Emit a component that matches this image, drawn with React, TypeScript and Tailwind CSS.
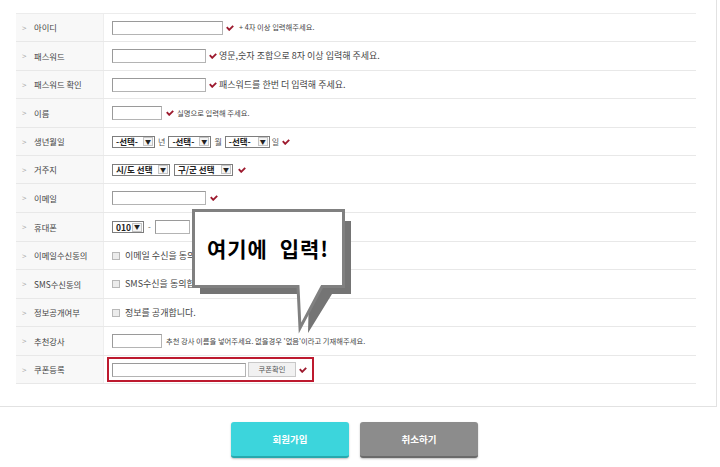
import React from "react";

const Chk = () => (
  <svg width="8" height="6" viewBox="0 0 8 6" className="shrink-0">
    <path d="M0.8 2.2 L3.2 4.8 L7.2 0.8" fill="none" stroke="#9d1a2e" strokeWidth="1.9" />
  </svg>
);

const Input = ({ w }: { w: string }) => (
  <div className={`${w} h-[14px] border border-[#b4b4b4] border-t-[#9a9a9a] border-l-[#9a9a9a] bg-white shrink-0`} />
);

const Select = ({ w, text }: { w: string; text: string }) => (
  <div
    className={`${w} h-[12px] border border-[#7d7d7d] bg-white flex items-center justify-between pl-[3px] pr-[1px] shrink-0`}
  >
    <span className="text-[8.5px] font-bold text-[#222] leading-none">{text}</span>
    <span className="h-[9px] px-[1px] border border-[#c4c4c4] bg-[#f4f4f4] flex items-center text-[6px] text-[#222] leading-none">
      ▼
    </span>
  </div>
);

const Box = () => <div className="w-[8px] h-[8px] border border-[#b8b8b8] bg-[#ececec] shrink-0" />;

const Row = ({ label, h, children }: { label: string; h: string; children?: React.ReactNode }) => (
  <div className={`flex ${h} border-b border-[#e8e8e8]`}>
    <div className="w-[88px] shrink-0 bg-[#f8f8f8] border-r border-[#eeeeee] flex items-center pl-[6px]">
      <span className="text-[8px] text-[#aaaaaa] leading-none w-[12px]">&gt;</span>
      <span className="text-[8.3px] text-[#444] leading-none">{label}</span>
    </div>
    <div className="flex-1 flex items-center pl-2">{children}</div>
  </div>
);

export default function App() {
  return (
    <div className="relative w-[720px] h-[467px] bg-white overflow-hidden font-['Noto_Sans_CJK_KR','Noto_Sans',sans-serif]">
      <div className="w-[717px] h-[407px] border-r border-b border-[#e2e2e2] pl-4 pr-5 pt-[13px]">
        <div className="border-t border-[#ececec]">
          <Row label="아이디" h="h-[28px]">
            <Input w="w-[111px]" />
            <span className="ml-[3px]"><Chk /></span>
            <span className="ml-[5px] text-[7.3px] text-[#444]">+ 4자 이상 입력해주세요.</span>
          </Row>
          <Row label="패스워드" h="h-[29px]">
            <Input w="w-[94px]" />
            <span className="ml-[3px]"><Chk /></span>
            <span className="ml-[2px] text-[9px] text-[#444]">영문,숫자 조합으로 8자 이상 입력해 주세요.</span>
          </Row>
          <Row label="패스워드 확인" h="h-[28px]">
            <Input w="w-[94px]" />
            <span className="ml-[3px]"><Chk /></span>
            <span className="ml-[2px] text-[9px] text-[#444]">패스워드를 한번 더 입력해 주세요.</span>
          </Row>
          <Row label="이름" h="h-[29px]">
            <Input w="w-[50px]" />
            <span className="ml-[4px]"><Chk /></span>
            <span className="ml-[3px] text-[7.3px] text-[#444]">실명으로 입력해 주세요.</span>
          </Row>
          <Row label="생년월일" h="h-[28px]">
            <Select w="w-[43px]" text="-선택-" />
            <span className="mx-[3px] text-[8px] text-[#555]">년</span>
            <Select w="w-[43px]" text="-선택-" />
            <span className="mx-[3px] text-[8px] text-[#555]">월</span>
            <Select w="w-[45px]" text="-선택-" />
            <span className="ml-[2px] text-[8px] text-[#555]">일</span>
            <span className="ml-[3px]"><Chk /></span>
          </Row>
          <Row label="거주지" h="h-[28px]">
            <Select w="w-[58px]" text="시/도 선택" />
            <div className="w-[4px]" />
            <Select w="w-[59px]" text="구/군 선택" />
            <span className="ml-[5px]"><Chk /></span>
          </Row>
          <Row label="이메일" h="h-[29px]">
            <Input w="w-[94px]" />
            <span className="ml-[4px]"><Chk /></span>
          </Row>
          <Row label="휴대폰" h="h-[29px]">
            <Select w="w-[32px]" text="010" />
            <span className="mx-[4px] text-[8px] text-[#555]">-</span>
            <Input w="w-[35px]" />
            <span className="mx-[4px] text-[8px] text-[#555]">-</span>
            <Input w="w-[35px]" />
          </Row>
          <Row label="이메일수신동의" h="h-[28px]">
            <Box />
            <span className="ml-[5px] text-[9px] text-[#444]">이메일 수신을 동의합니다.</span>
          </Row>
          <Row label="SMS수신동의" h="h-[29px]">
            <Box />
            <span className="ml-[5px] text-[9px] text-[#444]">SMS수신을 동의합니다.</span>
          </Row>
          <Row label="정보공개여부" h="h-[28px]">
            <Box />
            <span className="ml-[5px] text-[9px] text-[#444]">정보를 공개합니다.</span>
          </Row>
          <Row label="추천강사" h="h-[29px]">
            <Input w="w-[50px]" />
            <span className="ml-[4px] text-[7.3px] text-[#444]">
              추천 강사 이름을 넣어주세요. 없을경우 '없음'이라고 기재해주세요.
            </span>
          </Row>
          <Row label="쿠폰등록" h="h-[28px]">
            <div className="-ml-[5px] h-[25px] border-2 border-[#bd1a2f] flex items-center pl-[3px] pr-[5px]">
              <Input w="w-[134px]" />
              <div className="ml-[2px] w-[48px] h-[15px] border border-[#c8c8c8] bg-[#f1f1f1] flex items-center justify-center text-[7.3px] text-[#555]">
                쿠폰확인
              </div>
              <span className="ml-[3px]"><Chk /></span>
            </div>
          </Row>
        </div>
      </div>

      <div className="flex justify-center gap-[11px] pr-[11px] pt-[15px]">
        <button className="w-[118px] h-[36px] rounded-[3px] bg-[#3cd5dc] border-b-2 border-[#27a9ae] shadow-[0_1px_2px_rgba(0,0,0,0.25)] text-white text-[9.5px] font-bold">
          회원가입
        </button>
        <button className="w-[118px] h-[36px] rounded-[3px] bg-[#8c8c8c] border-b-2 border-[#6a6a6a] shadow-[0_1px_2px_rgba(0,0,0,0.25)] text-white text-[9.5px] font-bold">
          취소하기
        </button>
      </div>

      <div className="absolute left-[185px] top-[200px] w-[175px] h-[145px]">
        <svg width="175" height="145" viewBox="0 0 175 145" className="absolute inset-0">
          <path d="M15 21 H166 V94 H147 L123 133 L124 94 H15 Z" fill="#747474" />
          <path
            d="M8.5 10.5 H158.5 V86.5 H137 L115 128 L113 86.5 H8.5 Z"
            fill="#ffffff"
            stroke="#808080"
            strokeWidth="3"
            strokeLinejoin="miter"
          />
        </svg>
        <div className="absolute left-[8px] top-[10px] w-[150px] h-[77px] flex items-center justify-center">
          <span className="text-[21px] font-bold text-black leading-none tracking-[1px] [word-spacing:6px]">
            여기에 입력!
          </span>
        </div>
      </div>
    </div>
  );
}
